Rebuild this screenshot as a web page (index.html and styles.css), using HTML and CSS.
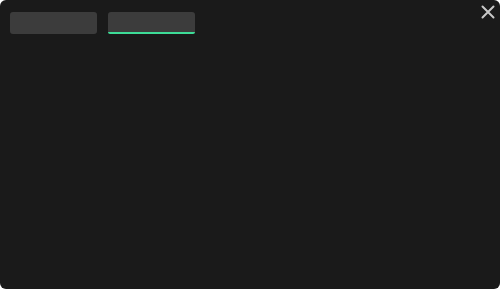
FILE: index.html
```html
<!DOCTYPE html>
<html>
<head>
<meta charset="utf-8">
<link rel="stylesheet" href="styles.css">
</head>
<body>
<div class="window">
  <div class="tabs">
    <div class="tab"></div>
    <div class="tab active"></div>
  </div>
  <button class="close" aria-label="Close">
    <svg width="14" height="14" viewBox="0 0 14 14"><path d="M1.5 1.5 L12.5 12.5 M12.5 1.5 L1.5 12.5" stroke="#c8c8c8" stroke-width="2" stroke-linecap="round" fill="none"/></svg>
  </button>
</div>
</body>
</html>
```
FILE: styles.css
```css
html, body { margin: 0; padding: 0; background: #ffffff; }
body { width: 500px; height: 289px; overflow: hidden; font-family: "Liberation Sans", sans-serif; }
.window {
  position: relative;
  width: 500px;
  height: 289px;
  background: #1a1a1a;
  border-radius: 6px;
  box-sizing: border-box;
  padding: 12px 10px;
}
.tabs { display: flex; gap: 11px; }
.tab {
  width: 87px;
  height: 22px;
  background: #3c3c3c;
  border-radius: 3px;
  box-sizing: border-box;
}
.tab.active { border-bottom: 2px solid #3ddc97; border-radius: 3px 3px 2px 2px; }
.close {
  position: absolute;
  top: 5px;
  right: 5px;
  width: 14px;
  height: 14px;
  padding: 0;
  border: 0;
  background: none;
  display: flex;
}
```
